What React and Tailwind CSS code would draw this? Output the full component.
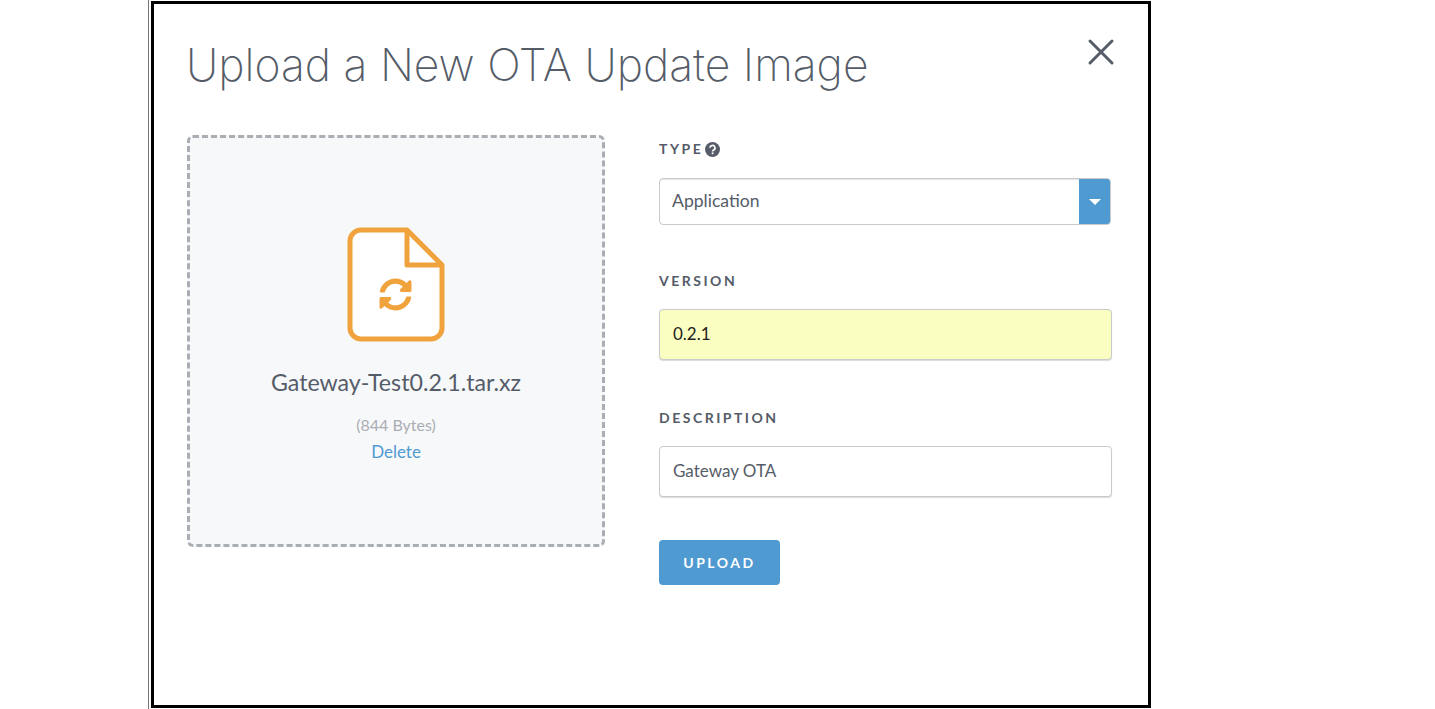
import { FaSyncAlt } from "react-icons/fa";

const body = { fontFamily: 'Lato, "Noto Sans", sans-serif' };
const title = { fontFamily: 'Inter, "Noto Sans", sans-serif' };

function FileIcon() {
  return (
    <div className="relative h-[116px] w-[99px]">
      <svg width="99" height="116" viewBox="0 0 99 116" fill="none" className="block">
        <path d="M14 3 H60 L95 38 V101 A11 11 0 0 1 84 112 H14 A11 11 0 0 1 3 101 V14 A11 11 0 0 1 14 3 Z" fill="#ffffff" stroke="#f0a33c" strokeWidth="5" strokeLinejoin="round" />
        <path d="M60 3 V38 H95" fill="none" stroke="#f0a33c" strokeWidth="5" strokeLinejoin="round" />
      </svg>
      <FaSyncAlt className="absolute left-[32px] top-[51px] text-[#f0a33c]" size={33} />
    </div>
  );
}

function Label({ children }) {
  return <div className="text-[14px] leading-[18px] font-bold tracking-[2.5px] text-[#555c68]">{children}</div>;
}

export default function App() {
  return (
    <div className="h-[709px] w-full bg-white pl-[148px]" style={body}>
      <div className="h-[709px] w-[1003px] border-l border-[#777777] pl-[2px] pt-px">
        <div className="flex h-[707px] w-[1000px] flex-col border-[3px] border-black bg-white pl-[33px]">
          <div className="flex items-start justify-between pr-[33px]">
            <h1 className="mt-[31px] -ml-px text-[44.4px] leading-[60px] font-extralight text-[#555c68]" style={title}>Upload a New OTA Update Image</h1>
            <svg width="28" height="28" viewBox="0 0 28 28" className="mt-[34px]" fill="none">
              <path d="M3 3 L25 25 M25 3 L3 25" stroke="#555c68" strokeWidth="3" strokeLinecap="round" />
            </svg>
          </div>
          <div className="mt-[40px] flex items-start">
            <div className="flex h-[412px] w-[418px] flex-col items-center rounded-[6px] border-[3px] border-dashed border-[#aaadb3] bg-[#f7f8fa] pt-[89px]">
              <FileIcon />
              <div className="mt-[24px] text-[23.2px] leading-[30px] text-[#555c68]">Gateway-Test0.2.1.tar.xz</div>
              <div className="mt-[14px] text-[16px] leading-[27px] text-[#aaadb3]">(844 Bytes)</div>
              <div className="text-[17px] leading-[27px] text-[#4f9ad1]">Delete</div>
            </div>
            <div className="ml-[54px] flex w-[453px] flex-col pt-[5px]">
              <div className="flex items-center gap-[2px]">
                <Label>TYPE</Label>
                <svg width="15" height="15" viewBox="0 0 15 15">
                  <circle cx="7.5" cy="7.5" r="7.5" fill="#555c68" />
                  <path d="M5 5.8 A2.5 2.4 0 1 1 8.6 8 C7.9 8.4 7.6 8.7 7.6 9.4" fill="none" stroke="#fff" strokeWidth="1.7" />
                  <rect x="6.7" y="10.4" width="1.8" height="1.8" fill="#fff" />
                </svg>
              </div>
              <div className="mt-[20px] flex h-[47px] w-[452px] overflow-hidden rounded-[4px] border border-[#c8cacd] bg-white shadow-[inset_0_1px_1px_rgba(0,0,0,0.1)]">
                <div className="flex flex-1 items-center pl-[12px] text-[17.6px] text-[#555c68]">Application</div>
                <div className="flex w-[31px] items-center justify-center bg-[#4f9ad1]">
                  <div className="h-0 w-0 border-x-[6px] border-t-[6px] border-x-transparent border-t-white"></div>
                </div>
              </div>
              <div className="mt-[47px]"><Label>VERSION</Label></div>
              <input readOnly value="0.2.1" className="mt-[19px] h-[51px] w-[453px] rounded-[4px] border border-[#c8cacd] bg-[#fafec0] pl-[13px] pb-[2px] text-[17px] text-[#222222] shadow-[0_1px_1px_rgba(0,0,0,0.15)] outline-none" />
              <div className="mt-[49px]"><Label>DESCRIPTION</Label></div>
              <input readOnly value="Gateway OTA" className="mt-[19px] h-[51px] w-[453px] rounded-[4px] border border-[#c8cacd] bg-white pl-[13px] pb-[2px] text-[17px] text-[#555c68] shadow-[0_1px_1px_rgba(0,0,0,0.15)] outline-none" />
              <button className="mt-[43px] h-[45px] w-[121px] rounded-[4px] bg-[#4f9ad1] text-[14px] font-bold tracking-[2.5px] text-white">UPLOAD</button>
            </div>
          </div>
        </div>
      </div>
    </div>
  );
}
